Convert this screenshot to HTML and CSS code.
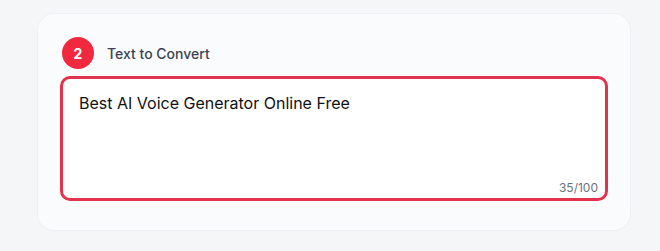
FILE: index.html
```html
<!DOCTYPE html>
<html lang="en">
<head>
<meta charset="utf-8">
<title>Text to Convert</title>
<link rel="stylesheet" href="styles.css">
</head>
<body>
<main class="page">
  <section class="card">
    <div class="step-head">
      <span class="step-badge">2</span>
      <span class="step-label">Text to Convert</span>
    </div>
    <div class="field">
      <textarea class="text-input" maxlength="100">Best AI Voice Generator Online Free</textarea>
      <span class="counter">35/100</span>
    </div>
  </section>
</main>
</body>
</html>
```

FILE: styles.css
```css
* { box-sizing: border-box; }
html, body {
  margin: 0;
  padding: 0;
  background: #f5f6f8;
  font-family: Inter, "Noto Sans", "Liberation Sans", sans-serif;
}
.page {
  padding: 14px 30px 21px 38px;
}
.card {
  background: #fafbfc;
  border-radius: 16px;
  box-shadow: 0 0 0 1px #f0f1f4, 0 1px 2px rgba(15, 23, 42, 0.03);
  padding: 23px 22px 29px 22px;
  height: 216px;
}
.step-head {
  display: flex;
  align-items: center;
  gap: 13px;
  margin-left: 2px;
  height: 32px;
}
.step-badge {
  width: 32px;
  height: 32px;
  border-radius: 50%;
  background: #f1293f;
  color: #ffffff;
  font-weight: 700;
  font-size: 14px;
  display: flex;
  align-items: center;
  justify-content: center;
}
.step-label {
  font-size: 14px;
  font-weight: 500;
  color: #3c4350;
}
.field {
  position: relative;
  margin-top: 7px;
}
.text-input {
  display: block;
  width: 100%;
  height: 125px;
  border: 3px solid #e3324b;
  border-radius: 10px;
  background: #ffffff;
  padding: 12px 16px;
  font-family: inherit;
  font-size: 16px;
  line-height: 24px;
  color: #111111;
  resize: none;
  outline: none;
}
.counter {
  position: absolute;
  right: 10px;
  bottom: 5px;
  font-size: 12px;
  line-height: 16px;
  color: #6b7280;
}
```
